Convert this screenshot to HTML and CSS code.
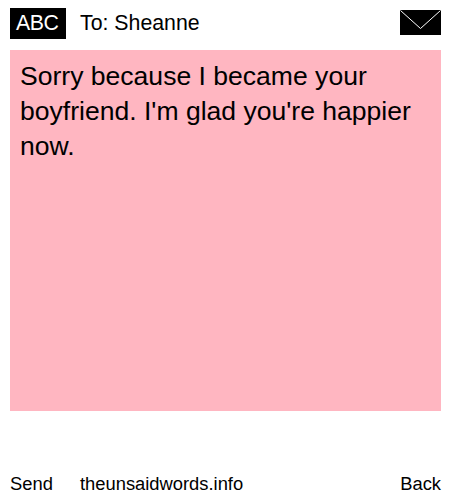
FILE: index.html
```html
<!DOCTYPE html>
<html lang="en">
<head>
    <meta charset="UTF-8">
    <meta name="viewport" content="width=device-width, initial-scale=1.0">
    <title>The Unsaid Words</title>
    <link rel="stylesheet" href="styles.css">
</head>
<body>
    <div class="wrap">
        <div class="top">
            <div class="abc">ABC</div>
            <div class="to">To: Sheanne</div>
            <svg class="mail" width="41" height="25" viewBox="0 0 41 25">
                <rect width="41" height="25" fill="#000"/>
                <path d="M0.5 0.5L20.5 18.5L40.5 0.5" fill="none" stroke="#fff" stroke-width="1"/>
            </svg>
        </div>
        <div class="message">Sorry because I became your boyfriend. I'm glad you're happier now.</div>
        <div class="bottom">
            <div class="send">Send</div>
            <div class="site">theunsaidwords.info</div>
            <div class="back">Back</div>
        </div>
    </div>
</body>
</html>
```
FILE: styles.css
```css
* {
    margin: 0;
    padding: 0;
    box-sizing: border-box;
}
body {
    background-color: #fff;
    color: #000;
    font-family: "Liberation Sans", Arial, sans-serif;
}
.wrap {
    width: 450px;
    height: 500px;
    padding: 8px 9px 0 10px;
    display: flex;
    flex-direction: column;
}
.top {
    height: 31px;
    display: flex;
    align-items: center;
}
.abc {
    width: 56px;
    height: 31px;
    line-height: 31px;
    padding-left: 6px;
    background-color: #000;
    color: #fff;
    font-size: 21.3px;
    letter-spacing: -0.5px;
}
.to {
    margin-left: 14px;
    font-size: 21.3px;
    flex: 1;
}
.mail {
    display: block;
    margin-bottom: 2px;
}
.message {
    margin-top: 11px;
    height: 361px;
    background-color: #ffb6c1;
    padding: 9px 10px;
    font-size: 26.55px;
    line-height: 35px;
}
.bottom {
    margin-top: 62px;
    display: flex;
    font-size: 18.35px;
    line-height: 22px;
}
.send {
    width: 70px;
}
.site {
    flex: 1;
}
```
